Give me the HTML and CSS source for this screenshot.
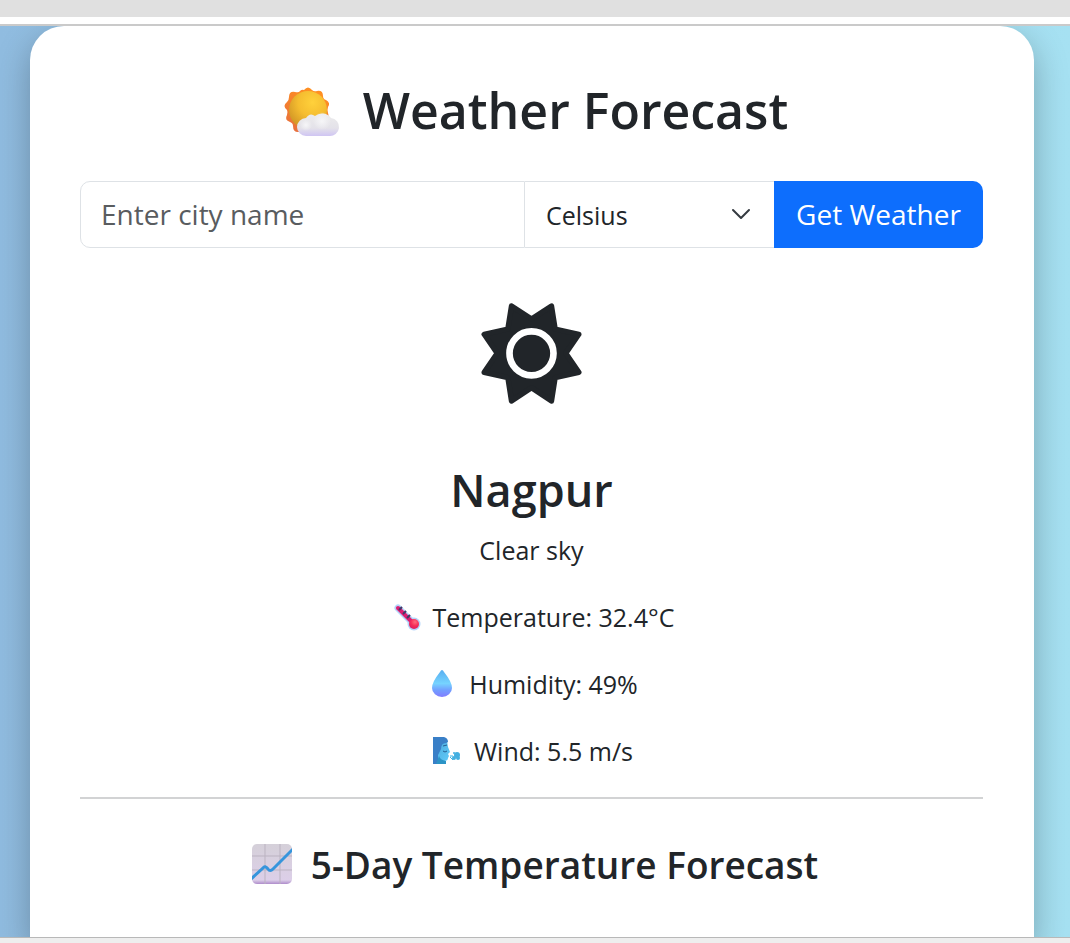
FILE: index.html
```html
<!DOCTYPE html>
<html lang="en">
<head>
<meta charset="utf-8">
<meta name="viewport" content="width=device-width, initial-scale=1">
<title>Weather Forecast</title>
<link rel="stylesheet" href="styles.css">
</head>
<body>
<div class="top-strip"></div>
<div class="viewport">
  <main class="card">
    <h1 class="title">
      <svg class="icon-title" viewBox="0 0 74 60" aria-hidden="true">
        <defs>
          <radialGradient id="sun" cx=".62" cy=".3" r=".75"><stop offset="0" stop-color="#ffd13b"/><stop offset=".5" stop-color="#f5bd30"/><stop offset="1" stop-color="#cf9425"/></radialGradient>
          <linearGradient id="rays" x1="0" y1="1" x2=".5" y2="0"><stop offset="0" stop-color="#e56c40"/><stop offset="1" stop-color="#ff8f22"/></linearGradient>
          <linearGradient id="cloud" x1="0" y1="0" x2="0" y2="1"><stop offset="0" stop-color="#ececec"/><stop offset=".65" stop-color="#e4e2e9"/><stop offset="1" stop-color="#cfc5f3"/></linearGradient>
          <radialGradient id="puff"><stop offset="0" stop-color="#f6f6f8"/><stop offset="1" stop-color="#f6f6f8" stop-opacity="0"/></radialGradient>
        </defs>
        <path d="M29 10Q33 5 37 10Q39 12 42 11Q48 10 48 16Q48 19 51 20Q56 23 53 27Q52 30 53 33Q55 38 50 39L33 52H23Q18 52 18 46Q18 43 15 42Q9 40 12 35Q13 32 12 30Q7 26 12 22Q14 20 14 17Q14 11 20 12Q24 13 25 11Q27 9 29 10z" fill="url(#rays)"/>
        <circle cx="33" cy="30" r="19" fill="url(#sun)"/>
        <path d="M31 56a9 9 0 0 1 0-18q4-6 9-2a11 11 0 0 1 16 2a9 9 0 0 1-2 18z" fill="url(#cloud)"/>
        <circle cx="47" cy="41" r="9" fill="url(#puff)"/><circle cx="31" cy="45" r="6" fill="url(#puff)"/>
      </svg>
      <span>Weather Forecast</span>
    </h1>

    <form class="search">
      <input class="city" type="text" placeholder="Enter city name" aria-label="City name">
      <div class="unit">
        <select class="unit-select" aria-label="Temperature unit">
          <option>Celsius</option>
          <option>Fahrenheit</option>
        </select>
        <svg class="chevron" viewBox="0 0 20 14" aria-hidden="true"><path d="M2 2l8 8 8-8"/></svg>
      </div>
      <button class="submit" type="button">Get Weather</button>
    </form>

    <section class="current">
      <svg class="sun" viewBox="63 39 302 303" aria-hidden="true">
        <path class="sun-body" d="M154 48L214 87 274 48 285 117 356 133 317 190 356 247 285 263 274 333 214 293 154 333 143 263 72 247 111 190 72 133 143 117z"/>
        <circle class="sun-ring" cx="214" cy="190" r="66"/>
      </svg>
      <h2 class="place">Nagpur</h2>
      <p class="line">Clear sky</p>
      <p class="line">
        <svg class="icon" viewBox="0 0 36 36" aria-hidden="true">
          <defs><radialGradient id="bulb" cx=".6" cy=".3" r=".8"><stop offset="0" stop-color="#ff6b7d"/><stop offset=".5" stop-color="#f52c58"/><stop offset="1" stop-color="#d51a68"/></radialGradient></defs>
          <path d="M9 9L22 22" stroke="#b4d5fa" stroke-width="7" stroke-linecap="round"/><circle cx="25" cy="25" r="6.500" fill="#b4d5fa"/>
          <path d="M9 9L23 23" stroke="#dc1d72" stroke-width="4" stroke-linecap="round"/><circle cx="25" cy="25" r="5" fill="url(#bulb)"/>
          <path d="M10 11l3-3M14 15l3-3M18 19l3-3" stroke="#413868" stroke-width="2"/>
        </svg>
        <span>Temperature: 32.4°C</span>
      </p>
      <p class="line">
        <svg class="icon" viewBox="0 0 36 36" aria-hidden="true">
          <defs><linearGradient id="drop" x1="0" y1="0" x2="0" y2="1"><stop offset="0" stop-color="#57aef0"/><stop offset=".5" stop-color="#76d3ff"/><stop offset=".75" stop-color="#729dff"/><stop offset="1" stop-color="#817dff"/></linearGradient></defs>
          <path d="M17 4Q18 4 19 6Q27 16 27 22A10 9 0 0 1 7 22Q7 16 15 6Q16 4 17 4z" fill="url(#drop)"/>
        </svg>
        <span>Humidity: 49%</span>
      </p>
      <p class="line">
        <svg class="icon" viewBox="0 0 36 36" aria-hidden="true">
          <defs><linearGradient id="face" x1="0" y1="0" x2="1" y2="1"><stop offset="0" stop-color="#48a7db"/><stop offset="1" stop-color="#63cdfb"/></linearGradient></defs>
          <path d="M7 8H17L18 14 20 19 18 21 19 23 18 25Q18 28 14 28H11V31H3V8z" fill="url(#face)"/>
          <path d="M3 4H14Q18 5 18 9L16 10Q11 10 11 16L8 22V31H3z" fill="#397fc7"/>
          <path d="M9 23Q10 27 16 28V31H6z" fill="#2c94c6"/>
          <path d="M13 13l4-1M13 18q2 2 4 0" fill="none" stroke="#245d91" stroke-width="1"/>
          <path d="M20 23h3M20 24l3 3" stroke="#3ab4e6" stroke-width="1"/>
          <g fill="#43afe0"><circle cx="24" cy="20" r="1"/><circle cx="27" cy="22" r="3"/><circle cx="24" cy="25" r="2"/><circle cx="28" cy="25" r="2"/></g>
        </svg>
        <span>Wind: 5.5 m/s</span>
      </p>
    </section>

    <hr class="rule">

    <h3 class="chart-title">
      <svg class="icon-chart" viewBox="0 0 54 48" aria-hidden="true">
        <defs><linearGradient id="paper" x1="0" y1="0" x2="0" y2="1"><stop offset="0" stop-color="#d5d0d9"/><stop offset=".9" stop-color="#dccfe8"/><stop offset="1" stop-color="#ae8ccb"/></linearGradient><clipPath id="sheet"><rect x="7" y="3" width="40" height="40" rx="5"/></clipPath></defs>
        <g clip-path="url(#sheet)">
          <path d="M7 3h40v40H7z" fill="url(#paper)"/>
          <path d="M20 3v40M35 3v40M7 15h40M7 29h40" stroke="#bbb3c1" stroke-width="1"/>
          <path d="M5 39L18 27Q20 24 23 28Q25 31 28 28L49 7" fill="none" stroke="#3695dc" stroke-width="3"/>
        </g>
      </svg>
      <span>5-Day Temperature Forecast</span>
    </h3>
  </main>
</div>
<div class="bottom-strip"></div>
</body>
</html>
```

FILE: styles.css
```css
* { box-sizing: border-box; }

body {
  margin: 0;
  height: 100vh;
  display: flex;
  flex-direction: column;
  overflow: hidden;
  background: #fff;
  color: #212529;
  font-family: "Open Sans", "Noto Sans", sans-serif;
  font-size: 26px;
  line-height: 40px;
}

.top-strip {
  flex: none;
  height: 24px;
  border-bottom: 7px solid #fff;
  background: #e0e0e0;
}

.viewport {
  flex: 1;
  min-height: 0;
  overflow: hidden;
  border-top: 2px solid #cacaca;
  border-bottom: 1px solid #b8b8b8;
  background: linear-gradient(to right, #90bce0, #a6e1f2);
}

.bottom-strip {
  flex: none;
  height: 5px;
  background: #eee;
}

.card {
  min-height: 100%;
  margin: 0 36px 0 30px;
  padding: 52px 51px 52px 50px;
  border-radius: 34px 34px 0 0;
  background: #fff;
  box-shadow: 0 12px 34px rgba(0, 0, 0, 0.27);
}

.title,
.chart-title,
.place {
  margin: 0;
  font-weight: 600;
  text-align: center;
}

.title {
  display: flex;
  justify-content: center;
  align-items: center;
  gap: 14px;
  margin-bottom: 39px;
  font-size: 50px;
  line-height: 64px;
}

.icon-title { width: 74px; height: 60px; }

.search {
  display: flex;
  height: 67px;
}

.city,
.unit-select,
.submit {
  margin: 0;
  font-family: inherit;
  color: inherit;
}

.city {
  flex: 1;
  min-width: 0;
  padding: 0 20px 2px;
  border: 1px solid #dee2e6;
  border-radius: 10px 0 0 10px;
  background: #fff;
  font-size: 28px;
}

.city::placeholder { color: #595c5f; opacity: 1; }

.unit {
  display: grid;
  align-items: center;
  width: 249px;
}

.unit-select,
.chevron { grid-area: 1 / 1; }

.unit-select {
  appearance: none;
  width: 100%;
  height: 67px;
  padding: 0 21px;
  border: 1px solid #dee2e6;
  border-width: 1px 0;
  border-radius: 0;
  background: #fff;
  font-size: 25px;
}

.chevron {
  justify-self: end;
  width: 20px;
  height: 14px;
  margin-right: 23px;
  fill: none;
  stroke: #343a40;
  stroke-width: 2;
  stroke-linecap: round;
  stroke-linejoin: round;
  pointer-events: none;
}

.submit {
  width: 209px;
  padding: 0 0 2px;
  border: 0;
  border-radius: 0 10px 10px 0;
  background: #0d6efd;
  color: #fff;
  font-size: 28px;
}

.current {
  display: flex;
  flex-direction: column;
  align-items: center;
  padding-top: 55px;
}

.sun { width: 101px; height: 101px; }

.sun-body {
  fill: #212529;
  stroke: #212529;
  stroke-width: 16;
  stroke-linejoin: round;
}

.sun-ring {
  fill: none;
  stroke: #fff;
  stroke-width: 20;
}

.place {
  margin: 58px 0 12px;
  font-size: 45px;
  line-height: 56px;
}

.line {
  display: flex;
  align-items: center;
  gap: 8px;
  margin: 0 0 27px;
  font-size: 25px;
}

.icon { width: 36px; height: 36px; }

.line:last-child { margin-bottom: 26px; }

.rule {
  margin: 0 0 42px;
  border: 0;
  border-top: 2px solid #d2d3d4;
}

.chart-title {
  display: flex;
  justify-content: center;
  align-items: center;
  gap: 12px;
  font-size: 37px;
  line-height: 48px;
}

.icon-chart { width: 54px; height: 48px; }
```
